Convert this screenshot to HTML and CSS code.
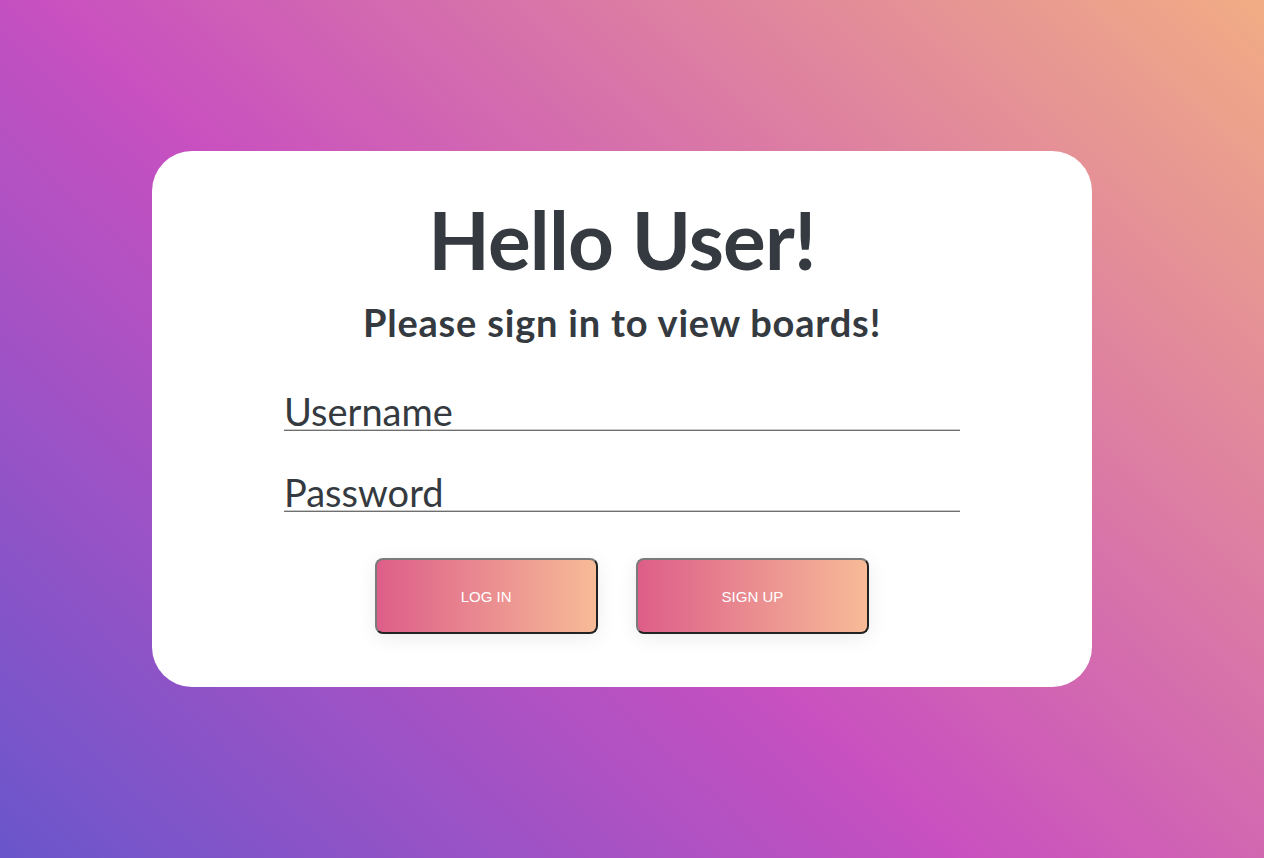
FILE: index.html
```html
<!DOCTYPE html>
<html lang="en">
<head>
<meta charset="utf-8">
<title>Sign in</title>
<link rel="stylesheet" href="styles.css">
</head>
<body>
<main class="page">
  <section class="card">
    <h1 class="title">Hello User!</h1>
    <h2 class="subtitle">Please sign in to view boards!</h2>
    <form class="form">
      <input class="field" type="text" placeholder="Username">
      <input class="field" type="password" placeholder="Password">
      <div class="actions">
        <button class="btn" type="button">LOG IN</button>
        <button class="btn" type="button">SIGN UP</button>
      </div>
    </form>
  </section>
</main>
</body>
</html>
```

FILE: styles.css
```css
* { box-sizing: border-box; }

html, body {
  margin: 0;
  height: 100%;
}

body {
  font-family: Lato, "Open Sans", sans-serif;
  color: #343a40;
  background: linear-gradient(43deg, #4158D0 -19%, #C850C0 44%, #FFCC70 119%);
}

.page {
  min-height: 100vh;
  display: flex;
  align-items: center;
  justify-content: center;
  padding: 0 20px 20px 0;
}

.card {
  width: 940px;
  height: 536px;
  background: #ffffff;
  border-radius: 40px;
  padding-top: 40px;
  display: flex;
  flex-direction: column;
  align-items: center;
}

.title {
  margin: 0;
  font-size: 80px;
  line-height: 96px;
  font-weight: 700;
  letter-spacing: -0.8px;
}

.subtitle {
  margin: 14px 0 0;
  font-size: 38px;
  line-height: 43px;
  font-weight: 700;
  letter-spacing: 0.8px;
}

.form {
  width: 676px;
  margin-top: 41px;
  display: flex;
  flex-direction: column;
}

.field {
  display: block;
  width: 100%;
  height: 46px;
  margin: 0 0 35px;
  padding: 7px 0 0;
  border: none;
  border-bottom: 1px solid #6f6f6f;
  box-shadow: inset 0 -1px 0 #c8c8c8;
  font-family: inherit;
  font-size: 38px;
  color: #343a40;
  background: transparent;
  outline: none;
}

.field::placeholder {
  color: #343a40;
  opacity: 1;
}

.actions {
  display: flex;
  justify-content: center;
  gap: 38px;
  margin-top: 11px;
}

.btn {
  height: 76px;
  padding: 0 84px;
  border-width: 2px;
  border-style: solid;
  border-color: #7a7a7a #222222 #222222 #7a7a7a;
  border-radius: 8px;
  background: linear-gradient(to right, #DD5E89, #F7BB97);
  color: #ffffff;
  font-family: "Liberation Sans", Arial, sans-serif;
  font-size: 15px;
  box-shadow: 0 4px 20px rgba(0, 0, 0, 0.08);
  cursor: pointer;
}
```
